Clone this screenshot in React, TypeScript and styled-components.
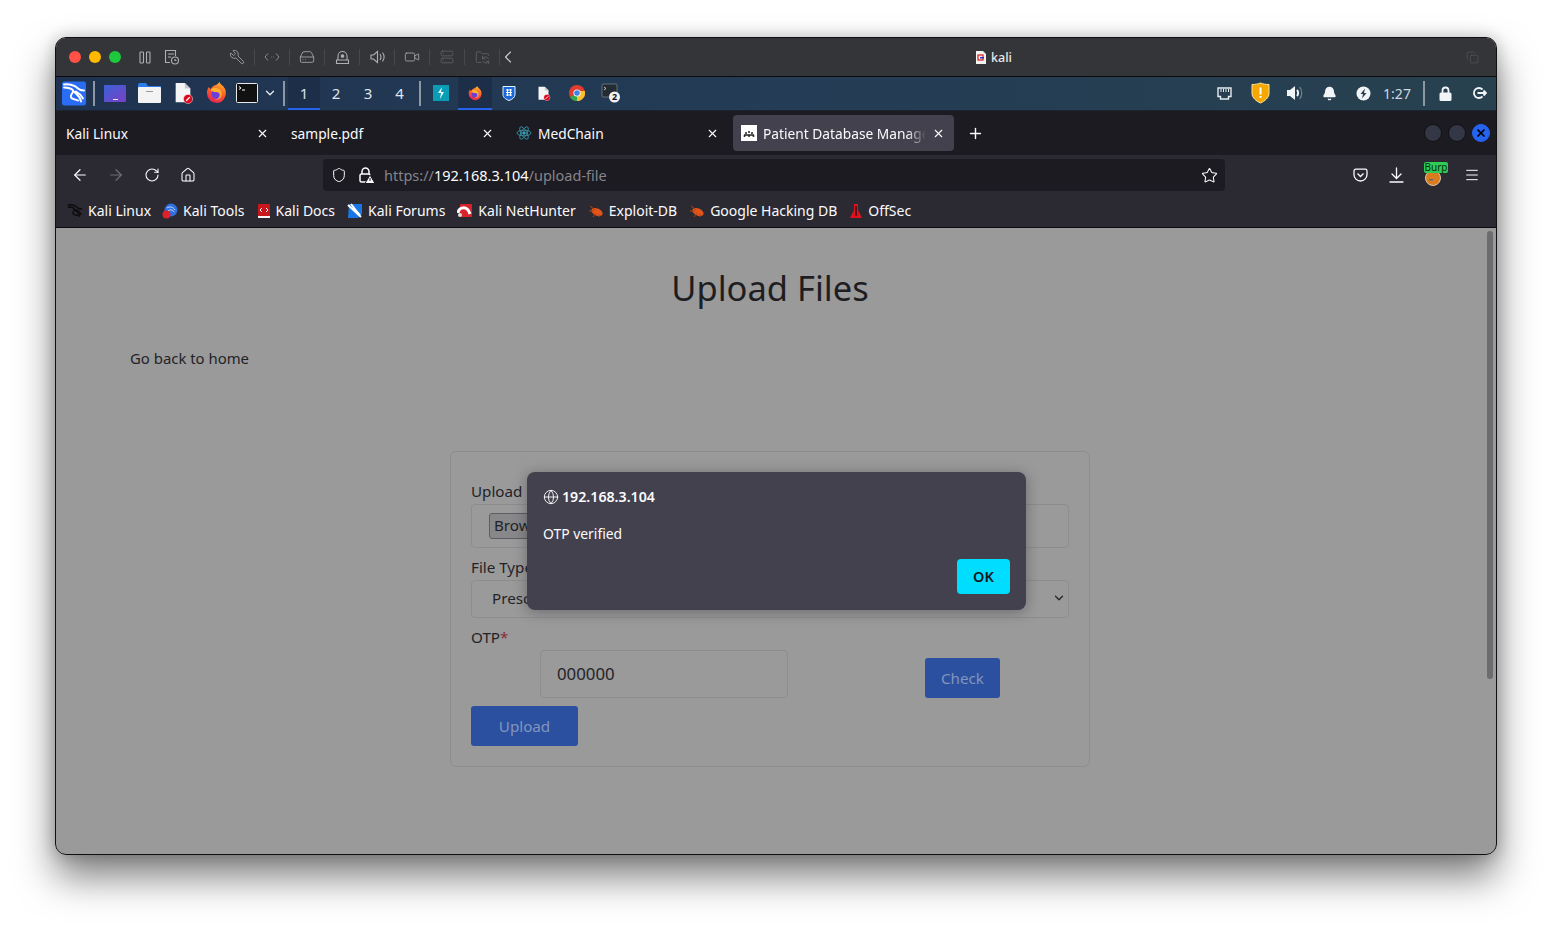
import React from "react";
import styled, { createGlobalStyle } from "styled-components";
import {
  Wrench, HardDrive, Video, Server, FolderSync, ChevronLeft, ChevronDown, Copy, ArrowLeft, ArrowRight,
  RotateCw, Home, Shield, Star, Menu, Globe, X, Plus, Bell,
} from "lucide-react";

const Global = createGlobalStyle`
  html, body { margin: 0; padding: 0; background: #fff; }
  body { font-family: "Noto Sans", "Liberation Sans", sans-serif; overflow: hidden; }
  * { box-sizing: border-box; }
`;

const Stage = styled.div`
  width: 1552px;
  height: 928px;
  padding: 37px 55px 73px 55px;
  background: #fff;
`;
const Win = styled.div`
  width: 1442px;
  height: 818px;
  border: 1px solid #101012;
  border-radius: 11px;
  overflow: hidden;
  display: flex;
  flex-direction: column;
  background: #9a9a9b;
`;
const WinShadow = styled.div`
  border-radius: 11px;
  box-shadow: 0 22px 38px rgba(0, 0, 0, 0.5), 0 0 16px rgba(0, 0, 0, 0.22);
`;
const TitleBar = styled.div`
  height: 39px;
  flex: none;
  display: flex;
  align-items: center;
  padding: 0 17px 0 13px;
  background: #343538;
  border-bottom: 1px solid #0c0c0e;
  color: #aeafb1;
`;
const Dot = styled.span<{ $c: string }>`
  width: 12px;
  height: 12px;
  border-radius: 50%;
  margin-right: 8px;
  background: ${(p) => p.$c};
`;
const TitleSlot = styled.div<{ $w: number; $ml?: number; $sep?: boolean }>`
  width: ${(p) => p.$w}px;
  height: 16px;
  margin-left: ${(p) => p.$ml ?? 0}px;
  display: flex;
  align-items: center;
  justify-content: center;
  border-right: ${(p) => (p.$sep ? "1px solid #47484b" : "none")};
`;
const WinTitle = styled.div`
  margin-left: 458px;
  display: flex;
  align-items: center;
  gap: 5px;
  font-size: 12.5px;
  font-weight: 500;
  color: #e8e8e8;
`;
const CopySlot = styled.div`
  margin-left: auto;
  color: #5c5d60;
  display: flex;
`;

const Panel = styled.div`
  height: 34px;
  flex: none;
  display: flex;
  align-items: center;
  padding-left: 2px;
  background: linear-gradient(90deg, #1f3350 0%, #243c55 50%, #28414f 100%);
  border-bottom: 1px solid #1b2530;
`;
const Slot = styled.div<{ $w?: number; $active?: boolean; $mr?: number }>`
  width: ${(p) => p.$w ?? 34}px;
  height: 33px;
  margin-right: ${(p) => p.$mr ?? 0}px;
  padding-bottom: 1px;
  flex: none;
  display: flex;
  align-items: center;
  justify-content: center;
  background: ${(p) => (p.$active ? "#1d2e49" : "transparent")};
  border-bottom: 2px solid ${(p) => (p.$active ? "#2563eb" : "transparent")};
  border-top: 2px solid transparent;
`;
const PanelSep = styled.div`
  width: 8px;
  flex: none;
  display: flex;
  justify-content: center;
  &::before {
    content: "";
    width: 2px;
    height: 25px;
    background: #8e98a3;
  }
`;
const WsNum = styled.span<{ $active?: boolean }>`
  color: ${(p) => (p.$active ? "#cfe3f5" : "#dfe6ec")};
  font-size: 15px;
`;
const RightTray = styled.div`
  margin-left: auto;
  display: flex;
  align-items: center;
`;
const Clock = styled.span`
  color: #cdd8e0;
  font-size: 14px;
  margin-right: 6px;
  width: 34px;
  text-align: center;
`;

const TabBar = styled.div`
  height: 44px;
  flex: none;
  display: flex;
  align-items: center;
  padding-left: 2px;
  background: #1c1b22;
`;
const Tab = styled.div<{ $active?: boolean }>`
  width: ${(p) => (p.$active ? 221 : 225)}px;
  height: 36px;
  flex: none;
  display: flex;
  align-items: center;
  gap: 6px;
  padding: 0 ${(p) => (p.$active ? "9px" : "14px")} 0 8px;
  border-radius: 4px;
  color: #fbfbfe;
  font-size: 13.75px;
  background: ${(p) => (p.$active ? "#42414d" : "transparent")};
  overflow: hidden;
`;
const TabLabel = styled.span<{ $fade?: boolean }>`
  flex: 1;
  min-width: 0;
  white-space: nowrap;
  overflow: hidden;
  ${(p) =>
    p.$fade
      ? "-webkit-mask-image: linear-gradient(90deg, #000 88%, transparent 100%); mask-image: linear-gradient(90deg, #000 88%, transparent 100%);"
      : ""}
`;
const NewTab = styled.div`
  width: 44px;
  margin-left: -1px;
  display: flex;
  justify-content: center;
  color: #fbfbfe;
`;
const WinBtns = styled.div`
  margin-left: auto;
  padding-right: 6px;
  display: flex;
  gap: 6px;
`;
const WinBtn = styled.div<{ $blue?: boolean }>`
  width: 18px;
  height: 18px;
  border-radius: 50%;
  display: flex;
  align-items: center;
  justify-content: center;
  background: ${(p) => (p.$blue ? "#2563f0" : "#343746")};
  border: 1px solid ${(p) => (p.$blue ? "#2563f0" : "#111")};
  color: #000;
`;

const NavBar = styled.div`
  height: 40px;
  flex: none;
  display: flex;
  align-items: center;
  background: #2b2a33;
  padding-left: 6px;
`;
const NavBtn = styled.div<{ $w?: number; $off?: boolean }>`
  width: ${(p) => p.$w ?? 36}px;
  height: 32px;
  flex: none;
  display: flex;
  align-items: center;
  justify-content: center;
  color: ${(p) => (p.$off ? "#6e6d75" : "#fbfbfe")};
`;
const UrlBar = styled.div`
  width: 902px;
  height: 32px;
  margin-left: 118px;
  flex: none;
  display: flex;
  align-items: center;
  padding: 0 7px 0 8px;
  border-radius: 4px;
  background: #1c1b22;
  color: #fbfbfe;
`;
const UrlIcon = styled.div<{ $w: number }>`
  width: ${(p) => p.$w}px;
  flex: none;
  display: flex;
  align-items: center;
`;
const UrlText = styled.div`
  flex: 1;
  font-size: 14.5px;
  color: #85848b;
  b {
    font-weight: 400;
    color: #fbfbfe;
  }
`;
const NavRight = styled.div`
  margin-left: 117px;
  display: flex;
  align-items: center;
`;
const BurpWrap = styled.div`
  position: relative;
  width: 38px;
  height: 32px;
  padding-top: 5px;
  display: flex;
  align-items: center;
  justify-content: center;
`;
const BurpBadge = styled.span`
  position: absolute;
  top: 3px;
  left: 10px;
  width: 24px;
  height: 11px;
  background: #2ecc55;
  border-radius: 2px;
  color: #083010;
  font-size: 10px;
  line-height: 11px;
  text-align: center;
`;

const Bookmarks = styled.div`
  height: 33px;
  flex: none;
  display: flex;
  align-items: center;
  gap: 12px;
  padding: 0 0 1px 11px;
  background: #2b2a33;
  border-bottom: 1px solid #0c0c0f;
`;
const Bookmark = styled.div`
  display: flex;
  align-items: center;
  gap: 5px;
  color: #fbfbfe;
  font-size: 14px;
  white-space: nowrap;
  &:first-child {
    margin-right: -1px;
  }
`;

const Body = styled.div`
  position: relative;
  flex: 1;
  min-height: 0;
  display: flex;
`;
const Page = styled.div`
  flex: 1;
  min-width: 0;
  padding: 37px 0 0;
  color: #232327;
`;
const Heading = styled.h1`
  margin: 0;
  text-align: center;
  font-size: 34.5px;
  line-height: 45px;
  font-weight: 400;
  color: #1e1e22;
`;
const BackLink = styled.div`
  margin: 36px 0 0 74px;
  font-size: 14.9px;
  line-height: 24px;
`;
const Card = styled.div`
  width: 640px;
  height: 316px;
  margin: 81px auto 0;
  padding: 28px 20px 0;
  border: 1px solid #8d8d8f;
  border-radius: 6px;
`;
const Label = styled.div`
  font-size: 15.2px;
  line-height: 22px;
  padding-bottom: 2px;
  i {
    font-style: normal;
    color: #8c2b3a;
  }
`;
const FileField = styled.div`
  height: 44px;
  display: flex;
  align-items: center;
  padding-left: 17px;
  border: 1px solid #8d8d8f;
  border-radius: 4px;
  margin-bottom: 8px;
`;
const BrowseBtn = styled.div`
  height: 26px;
  padding: 0 4px 2px;
  display: flex;
  align-items: center;
  background: #88888b;
  border: 1px solid #5e5e62;
  border-radius: 3px;
  font-size: 15.2px;
`;
const SelectField = styled.div`
  height: 38px;
  display: flex;
  align-items: center;
  justify-content: space-between;
  padding: 0 2px 2px 20px;
  border: 1px solid #8d8d8f;
  border-radius: 4px;
  margin-bottom: 8px;
  font-size: 15.2px;
`;
const OtpRow = styled.div`
  display: flex;
  align-items: flex-end;
  height: 48px;
`;
const OtpInput = styled.div`
  width: 248px;
  height: 48px;
  margin-left: 69px;
  padding: 0 0 2px 16px;
  display: flex;
  align-items: center;
  border: 1px solid #8d8d8f;
  border-radius: 4px;
  font-size: 16.8px;
`;
const Btn = styled.div<{ $w: number; $h: number; $ml?: number; $mt?: number }>`
  width: ${(p) => p.$w}px;
  height: ${(p) => p.$h}px;
  margin-left: ${(p) => p.$ml ?? 0}px;
  margin-top: ${(p) => p.$mt ?? 0}px;
  padding-bottom: 1px;
  display: flex;
  align-items: center;
  justify-content: center;
  background: #2b50a0;
  border-radius: 3px;
  color: #8295bd;
  font-size: 15.2px;
`;
const ScrollTrack = styled.div`
  width: 12px;
  flex: none;
  padding: 3px 2px 0 2px;
  display: flex;
  justify-content: center;
`;
const ScrollThumb = styled.div`
  width: 6px;
  height: 448px;
  border-radius: 3px;
  background: #6c6c6e;
`;
const Dialog = styled.div`
  position: absolute;
  left: 471px;
  top: 244px;
  width: 499px;
  height: 138px;
  padding: 15px 16px 16px;
  display: flex;
  flex-direction: column;
  border-radius: 8px;
  background: #42414d;
  color: #fbfbfe;
  box-shadow: 0 2px 14px rgba(20, 20, 25, 0.35);
`;
const DialogHost = styled.div`
  display: flex;
  align-items: center;
  gap: 3px;
  font-size: 14.2px;
  font-weight: 600;
  line-height: 20px;
`;
const DialogMsg = styled.div`
  margin-top: 17px;
  font-size: 13.9px;
  line-height: 20px;
`;
const OkBtn = styled.div`
  align-self: flex-end;
  margin-top: auto;
  width: 53px;
  height: 35px;
  padding-bottom: 2px;
  display: flex;
  align-items: center;
  justify-content: center;
  border-radius: 4px;
  background: #00ddff;
  color: #15141a;
  font-size: 14.5px;
  font-weight: 600;
`;

const Firefox = ({ s = 22 }: { s?: number }) => (
  <svg width={s} height={s} viewBox="0 0 24 24">
    <defs>
      <linearGradient id={`ffg${s}`} x1="0.7" y1="0" x2="0.3" y2="1">
        <stop offset="0" stopColor="#ffb32b" />
        <stop offset="0.5" stopColor="#ff5a2a" />
        <stop offset="1" stopColor="#e3205a" />
      </linearGradient>
    </defs>
    <path d="M12 23A11 11 0 0 1 1 12c0-2.500.8-4.800 2.200-6.600L5 8c1-2 3-4 5-4.500C12 3 14 1 15 0c0 2 2 3 4 5a11 11 0 0 1-7 18z" fill={`url(#ffg${s})`} />
    <circle cx="11.500" cy="13" r="5.600" fill="#6d3fd6" />
    <path d="M5 9c2-3 5-3 8-2 3 1 5 4 4 8-1 3-4 5-7 4 3 0 5-2 5-5 0-2-2-3-4-3-3 0-4-1-6-2z" fill="#ffb02b" />
  </svg>
);
const DocBlock = ({ s = 22 }: { s?: number }) => (
  <svg width={s} height={s} viewBox="0 0 22 24">
    <path d="M3 1h10l6 6v15H3z" fill="#f5f5f5" />
    <path d="M13 1l6 6h-6z" fill="#c9c9c9" />
    <circle cx="16.500" cy="18.500" r="5" fill="#d9071c" stroke="#fff" strokeWidth="0.500" />
    <path d="M14.500 20.500l4-4" stroke="#fff" strokeWidth="1.500" />
  </svg>
);
const KaliMark = ({ c = "#fff", w = 1.9 }: { c?: string; w?: number }) => (
  <path
    d="M2 3c5-1 11 1 14 4 2 2 4 2 6 2M2 6c3 0 8 1 9 3 1 3-3 3-2 7 1 2 5 2 7 3M12 10c2 3 6 4 7 10M14 10c2 1 5 3 7 7"
    stroke={c}
    strokeWidth={w}
    fill="none"
    strokeLinecap="round"
  />
);
const Bug = () => (
  <svg width="16" height="16" viewBox="0 0 16 16">
    <ellipse cx="9" cy="9" rx="6" ry="3.500" transform="rotate(25 9 9)" fill="#e2541a" />
    <path d="M2 3l5 4M1 8l5 0M5 14l3-4M11 14l0-3" stroke="#b8410f" strokeWidth="1" />
  </svg>
);
const Spacer16 = styled.span`
  width: 16px;
  height: 16px;
  flex: none;
  display: flex;
`;

const bookmarks: [React.ReactNode, string][] = [
  [<svg width="16" height="16" viewBox="0 0 24 24"><KaliMark c="#0b0b0d" w={2} /></svg>, "Kali Linux"],
  [
    <svg width="16" height="16" viewBox="0 0 16 16">
      <circle cx="9" cy="7" r="6.500" fill="#2f6fe0" />
      <path d="M5 5c3-2 6-1 8 2M6 8c2-2 5-1 6 1" stroke="#cfe0ff" fill="none" />
      <circle cx="4.500" cy="11.500" r="4" fill="#e0202a" />
    </svg>,
    "Kali Tools",
  ],
  [
    <svg width="14" height="16" viewBox="0 0 14 16">
      <rect x="1" y="1" width="12" height="14" rx="1" fill="#c8161d" />
      <path d="M5 5L3 7l2 2M9 5l2 2-2 2" stroke="#fff" fill="none" />
      <rect x="1" y="13" width="12" height="2" fill="#f3f3f3" />
    </svg>,
    "Kali Docs",
  ],
  [
    <svg width="16" height="16" viewBox="0 0 16 16">
      <path d="M2 1h13v10l-4 4H1z" fill="#1877e6" />
      <path d="M1 2l13 12M4 1c3 4 6 8 9 11" stroke="#fff" strokeWidth="2" fill="none" />
    </svg>,
    "Kali Forums",
  ],
  [
    <svg width="16" height="16" viewBox="0 0 16 16">
      <rect x="3" y="1" width="12" height="13" rx="1" fill="#d9232c" />
      <path d="M1 10c1-6 9-8 12 1" stroke="#fff" strokeWidth="3" fill="none" />
      <circle cx="3" cy="12" r="2" fill="#ddd" />
    </svg>,
    "Kali NetHunter",
  ],
  [<Bug />, "Exploit-DB"],
  [<Bug />, "Google Hacking DB"],
  [
    <svg width="14" height="16" viewBox="0 0 14 16">
      <path d="M5 1h4v6l4 8H1l4-8z" fill="#e01020" />
      <rect x="6" y="3" width="2" height="10" fill="#5c0a0f" />
    </svg>,
    "OffSec",
  ],
];

export default function App() {
  return (
    <Stage>
      <Global />
      <WinShadow>
        <Win>
          <TitleBar>
            <Dot $c="#ff5146" />
            <Dot $c="#ffb900" />
            <Dot $c="#1ec83c" />
            <TitleSlot $w={20} $ml={6}>
              <svg width="12" height="13" viewBox="0 0 12 13" fill="none" stroke="currentColor" strokeWidth="1.100">
                <rect x="1" y="1" width="3.500" height="11" rx="0.800" />
                <rect x="7.500" y="1" width="3.500" height="11" rx="0.800" />
              </svg>
            </TitleSlot>
            <TitleSlot $w={20} $ml={7}>
              <svg width="16" height="16" viewBox="0 0 16 16" fill="none" stroke="currentColor" strokeWidth="1.100">
                <path d="M6 13.500H1.500v-12h10V7M4 5h6M4 8h3" />
                <circle cx="11" cy="11.500" r="3.500" />
                <path d="M11 10v1.500h1.500" />
              </svg>
            </TitleSlot>
            <TitleSlot $w={35} $ml={38} $sep>
              <Wrench size={16} strokeWidth={1.2} style={{ transform: "scaleX(-1)" }} />
            </TitleSlot>
            <TitleSlot $w={35} $sep>
              <svg width="16" height="10" viewBox="0 0 16 10" fill="none" stroke="#8a8b8e" strokeWidth="1">
                <path d="M4 1.500L1 5l3 3.500M12 1.500L15 5l-3 3.500" />
                <path d="M7 5h.6M9 5h.6" />
              </svg>
            </TitleSlot>
            <TitleSlot $w={35} $sep>
              <HardDrive size={16} strokeWidth={1.2} />
            </TitleSlot>
            <TitleSlot $w={35} $sep>
              <svg width="15" height="15" viewBox="0 0 15 15" fill="none" stroke="currentColor" strokeWidth="1.100">
                <path d="M3 10V6a4.500 4.500 0 0 1 9 0v4M1.500 10h12v3.500h-12z" />
                <circle cx="7.500" cy="6" r="1.300" fill="currentColor" />
              </svg>
            </TitleSlot>
            <TitleSlot $w={35} $sep>
              <svg width="15" height="14" viewBox="0 0 15 14" fill="none" stroke="currentColor" strokeWidth="1.100">
                <path d="M1 5h2.500L7.500 1.500v11L3.500 9H1z" />
                <path d="M7.500 5v4M10 4c1.200 1.800 1.200 4.200 0 6M12.500 2.500c2 2.800 2 6.200 0 9" />
              </svg>
            </TitleSlot>
            <TitleSlot $w={35} $sep>
              <Video size={16} strokeWidth={1.2} />
            </TitleSlot>
            <TitleSlot $w={35} $sep>
              <Server size={14} strokeWidth={1.1} color="#6d6e71" />
            </TitleSlot>
            <TitleSlot $w={35} $sep>
              <FolderSync size={15} strokeWidth={1.1} color="#6d6e71" />
            </TitleSlot>
            <TitleSlot $w={20} $ml={-2}>
              <ChevronLeft size={20} strokeWidth={1.3} color="#d2d3d5" />
            </TitleSlot>
            <WinTitle>
              <svg width="10" height="13" viewBox="0 0 10 13">
                <path d="M0 0h7l3 3v10H0z" fill="#f3f3f3" />
                <rect x="2" y="4" width="5" height="5" fill="none" stroke="#d81a1a" strokeWidth="1.200" />
                <rect x="4" y="6" width="4" height="1.500" fill="#2030c0" />
              </svg>
              kali
            </WinTitle>
            <CopySlot>
              <Copy size={13} strokeWidth={1.1} />
            </CopySlot>
          </TitleBar>

          <Panel>
            <Slot $w={32}>
              <svg width="24" height="25" viewBox="0 0 24 24">
                <rect width="24" height="24" rx="2.500" fill="#2a6df4" />
                <KaliMark />
              </svg>
            </Slot>
            <PanelSep />
            <Slot>
              <svg width="22" height="17" viewBox="0 0 22 17">
                <defs>
                  <linearGradient id="dsk" x1="0" y1="0" x2="1" y2="1">
                    <stop offset="0" stopColor="#3b62d8" />
                    <stop offset="1" stopColor="#7a3fc4" />
                  </linearGradient>
                </defs>
                <rect width="22" height="17" rx="1" fill="url(#dsk)" />
                <rect x="9" y="14" width="5" height="1" fill="#dfe3ff" />
              </svg>
            </Slot>
            <Slot>
              <svg width="23" height="20" viewBox="0 0 23 20">
                <path d="M0 2a2 2 0 0 1 2-2h6l2 3h13v3H0z" fill="#2a7de8" />
                <rect y="4" width="23" height="16" rx="1" fill="#f3f3f3" />
                <rect x="8" y="8" width="7" height="1" fill="#999" />
              </svg>
            </Slot>
            <Slot>
              <DocBlock />
            </Slot>
            <Slot>
              <Firefox />
            </Slot>
            <Slot $w={26}>
              <svg width="22" height="20" viewBox="0 0 22 20">
                <rect x="0.500" y="0.500" width="21" height="19" rx="1" fill="#111" stroke="#e8e8e8" />
                <path d="M3 3.500l2 1.500-2 1.500M6 7h3" stroke="#fff" strokeWidth="1" fill="none" />
              </svg>
            </Slot>
            <Slot $w={20}>
              <ChevronDown size={14} strokeWidth={2.2} color="#e8edf2" />
            </Slot>
            <PanelSep />
            <Slot $w={32} $active>
              <WsNum $active>1</WsNum>
            </Slot>
            <Slot $w={32}>
              <WsNum>2</WsNum>
            </Slot>
            <Slot $w={32}>
              <WsNum>3</WsNum>
            </Slot>
            <Slot $w={31}>
              <WsNum>4</WsNum>
            </Slot>
            <Slot $w={1} />
            <PanelSep />
            <Slot>
              <svg width="16" height="16" viewBox="0 0 16 16">
                <rect width="16" height="16" fill="#0a9db5" />
                <path d="M9 2L5 8h3l-1 6 4-7H8z" fill="#e8fbff" />
              </svg>
            </Slot>
            <Slot $active>
              <Firefox s={15} />
            </Slot>
            <Slot>
              <svg width="14" height="16" viewBox="0 0 14 16">
                <path d="M1 1.500h12v8c0 3-3 5-6 6-3-1-6-3-6-6z" fill="#1868d8" stroke="#e6f0ff" strokeWidth="1" />
                <path d="M4 5h6M4 7.500h6M4 10h6M5.500 4v7M8.500 4v7" stroke="#fff" strokeWidth="1" />
              </svg>
            </Slot>
            <Slot>
              <DocBlock s={15} />
            </Slot>
            <Slot>
              <svg width="16" height="16" viewBox="0 0 16 16">
                <circle cx="8" cy="8" r="8" fill="#e33b2e" />
                <path d="M8 8L1 12a8 8 0 0 0 7 4z" fill="#2da94f" />
                <path d="M8 16a8 8 0 0 0 7.800-10H8z" fill="#fbc02d" />
                <circle cx="8" cy="8" r="3.600" fill="#fff" />
                <circle cx="8" cy="8" r="2.800" fill="#3f83e8" />
              </svg>
            </Slot>
            <Slot>
              <svg width="20" height="20" viewBox="0 0 20 20">
                <rect x="1" y="1" width="15" height="13" rx="1" fill="#232b33" stroke="#8f9aa3" strokeWidth="0.600" />
                <path d="M3 4l2 1.500L3 7" stroke="#e8e8e8" fill="none" strokeWidth="0.800" />
                <circle cx="13.500" cy="14" r="5.500" fill="#f2f2f2" />
                <text x="13.500" y="17.200" textAnchor="middle" fontSize="9" fontWeight="700" fill="#111" fontFamily="Noto Sans">2</text>
              </svg>
            </Slot>
            <RightTray>
              <Slot $mr={2}>
                <svg width="15" height="13" viewBox="0 0 15 13" fill="none" stroke="#e8edf0" strokeWidth="1.400">
                  <path d="M1 1h13v8.500h-2.500V12h-8V9.500H1z" />
                  <path d="M4 2v3M6.500 2v3M9 2v3M11.500 2v3" strokeWidth="1" />
                </svg>
              </Slot>
              <Slot $mr={1}>
                <svg width="19" height="22" viewBox="0 0 19 22">
                  <path d="M1 2.500c3 0 6-.5 8.500-1.500C12 2 15 2.500 18 2.500v9c0 4-4 7.500-8.500 9.500C5 19 1 15.500 1 11.500z" fill="#f6a800" stroke="#ffe2a0" strokeWidth="1" />
                  <rect x="8.500" y="5.500" width="2" height="7" fill="#fff" />
                  <rect x="8.500" y="14" width="2" height="2" fill="#fff" />
                </svg>
              </Slot>
              <Slot>
                <svg width="18" height="16" viewBox="0 0 18 16">
                  <path d="M1 5h3l5-4v14l-5-4H1z" fill="#f2f5f7" />
                  <path d="M11 5c1.500 1.500 1.500 4.500 0 6" stroke="#f2f5f7" strokeWidth="2" fill="none" />
                  <path d="M13.500 2c3 3 3 9 0 12" stroke="#6c7d89" strokeWidth="1.300" fill="none" />
                </svg>
              </Slot>
              <Slot>
                <Bell size={15} fill="#f2f5f7" color="#f2f5f7" />
              </Slot>
              <Slot>
                <svg width="15" height="15" viewBox="0 0 15 15">
                  <circle cx="7.500" cy="7.500" r="7" fill="#f2f5f7" />
                  <path d="M9 2.500L4.500 8H7l-1 4.500L10.500 7H8z" fill="#27404f" />
                </svg>
              </Slot>
              <Clock>1:27</Clock>
              <PanelSep />
              <Slot>
                <svg width="13" height="15" viewBox="0 0 13 15">
                  <path d="M3.500 7V4.500a3 3 0 0 1 6 0V7" stroke="#f2f5f7" strokeWidth="1.800" fill="none" />
                  <rect x="0.500" y="6.500" width="12" height="8.500" rx="1.500" fill="#f2f5f7" />
                </svg>
              </Slot>
              <Slot>
                <svg width="15" height="14" viewBox="0 0 15 14" fill="none" stroke="#f2f5f7" strokeWidth="1.800">
                  <path d="M10.500 3.500A5 5 0 1 0 10.500 10.500" />
                  <path d="M5.500 7H14M11.500 4.500L14 7l-2.500 2.500" />
                </svg>
              </Slot>
            </RightTray>
          </Panel>

          <TabBar>
            <Tab>
              <TabLabel>Kali Linux</TabLabel>
              <X size={13} />
            </Tab>
            <Tab>
              <TabLabel>sample.pdf</TabLabel>
              <X size={13} />
            </Tab>
            <Tab>
              <Spacer16>
                <svg width="16" height="16" viewBox="0 0 16 16" fill="none" stroke="#3c9fb5" strokeWidth="0.800">
                  <ellipse cx="8" cy="8" rx="7" ry="2.800" />
                  <ellipse cx="8" cy="8" rx="7" ry="2.800" transform="rotate(60 8 8)" />
                  <ellipse cx="8" cy="8" rx="7" ry="2.800" transform="rotate(120 8 8)" />
                  <circle cx="8" cy="8" r="1.300" fill="#3c9fb5" />
                </svg>
              </Spacer16>
              <TabLabel>MedChain</TabLabel>
              <X size={13} />
            </Tab>
            <Tab $active>
              <Spacer16>
                <svg width="16" height="16" viewBox="0 0 16 16">
                  <rect width="16" height="16" fill="#fff" />
                  <path d="M3 10h10M4 8h2M10 8h2M7 7h2" stroke="#222" strokeWidth="1.500" />
                  <circle cx="3.500" cy="11" r="1" fill="#222" />
                  <circle cx="8" cy="11" r="1" fill="#222" />
                  <circle cx="12.500" cy="11" r="1" fill="#222" />
                </svg>
              </Spacer16>
              <TabLabel $fade>Patient Database Management</TabLabel>
              <X size={13} />
            </Tab>
            <NewTab>
              <Plus size={17} />
            </NewTab>
            <WinBtns>
              <WinBtn />
              <WinBtn />
              <WinBtn $blue>
                <X size={12} strokeWidth={3.5} />
              </WinBtn>
            </WinBtns>
          </TabBar>

          <NavBar>
            <NavBtn>
              <ArrowLeft size={18} strokeWidth={1.6} />
            </NavBtn>
            <NavBtn $off>
              <ArrowRight size={18} strokeWidth={1.6} />
            </NavBtn>
            <NavBtn>
              <RotateCw size={16} strokeWidth={1.6} />
            </NavBtn>
            <NavBtn $w={35}>
              <Home size={16} strokeWidth={1.6} />
            </NavBtn>
            <UrlBar>
              <UrlIcon $w={27}>
                <Shield size={16} strokeWidth={1.5} />
              </UrlIcon>
              <UrlIcon $w={26}>
                <svg width="17" height="17" viewBox="0 0 17 17">
                  <path d="M4 7V4.500a3.500 3.500 0 0 1 7 0V7" stroke="#fbfbfe" strokeWidth="1.500" fill="none" />
                  <rect x="2" y="7" width="10" height="8" rx="1.500" fill="none" stroke="#fbfbfe" strokeWidth="1.500" />
                  <path d="M12 8l5 8.500H7z" fill="#fbfbfe" stroke="#1c1b22" />
                  <rect x="11.500" y="11" width="1" height="3" fill="#1c1b22" />
                </svg>
              </UrlIcon>
              <UrlText>
                https://<b>192.168.3.104</b>/upload-file
              </UrlText>
              <Star size={17} strokeWidth={1.5} />
            </UrlBar>
            <NavRight>
              <NavBtn>
                <svg width="15" height="14" viewBox="0 0 15 14" fill="none" stroke="#fbfbfe" strokeWidth="1.300">
                  <path d="M1 3a1.800 1.800 0 0 1 1.800-1.800h9.400A1.800 1.800 0 0 1 14 3v3.500a6.500 6.500 0 0 1-13 0z" />
                  <path d="M4.500 5.500l3 3 3-3" />
                </svg>
              </NavBtn>
              <NavBtn>
                <svg width="15" height="16" viewBox="0 0 15 16" fill="none" stroke="#fbfbfe" strokeWidth="1.300" strokeLinecap="round">
                  <path d="M7.500 1v10M3 7l4.500 4.500L12 7M1 15h13" />
                </svg>
              </NavBtn>
              <BurpWrap>
                <svg width="16" height="16" viewBox="0 0 16 16">
                  <circle cx="8" cy="8" r="7.500" fill="#d97b1f" stroke="#d8c8b0" />
                  <rect x="4" y="9" width="4" height="1.500" fill="#6b6b6b" />
                </svg>
                <BurpBadge>Burp</BurpBadge>
              </BurpWrap>
              <NavBtn $w={40}>
                <Menu size={16} strokeWidth={1.5} />
              </NavBtn>
            </NavRight>
          </NavBar>

          <Bookmarks>
            {bookmarks.map(([icon, name]) => (
              <Bookmark key={name}>
                {icon}
                {name}
              </Bookmark>
            ))}
          </Bookmarks>

          <Body>
            <Page>
              <Heading>Upload Files</Heading>
              <BackLink>Go back to home</BackLink>
              <Card>
                <Label>Upload File</Label>
                <FileField>
                  <BrowseBtn>Browse...</BrowseBtn>
                </FileField>
                <Label>File Type</Label>
                <SelectField>
                  Prescription
                  <ChevronDown size={14} strokeWidth={2.2} color="#26262a" />
                </SelectField>
                <Label>
                  OTP<i>*</i>
                </Label>
                <OtpRow>
                  <OtpInput>000000</OtpInput>
                  <Btn $w={75} $h={40} $ml={137}>
                    Check
                  </Btn>
                </OtpRow>
                <Btn $w={107} $h={40} $mt={8}>
                  Upload
                </Btn>
              </Card>
            </Page>
            <ScrollTrack>
              <ScrollThumb />
            </ScrollTrack>
            <Dialog>
              <DialogHost>
                <Globe size={16} strokeWidth={1.4} />
                192.168.3.104
              </DialogHost>
              <DialogMsg>OTP verified</DialogMsg>
              <OkBtn>OK</OkBtn>
            </Dialog>
          </Body>
        </Win>
      </WinShadow>
    </Stage>
  );
}
